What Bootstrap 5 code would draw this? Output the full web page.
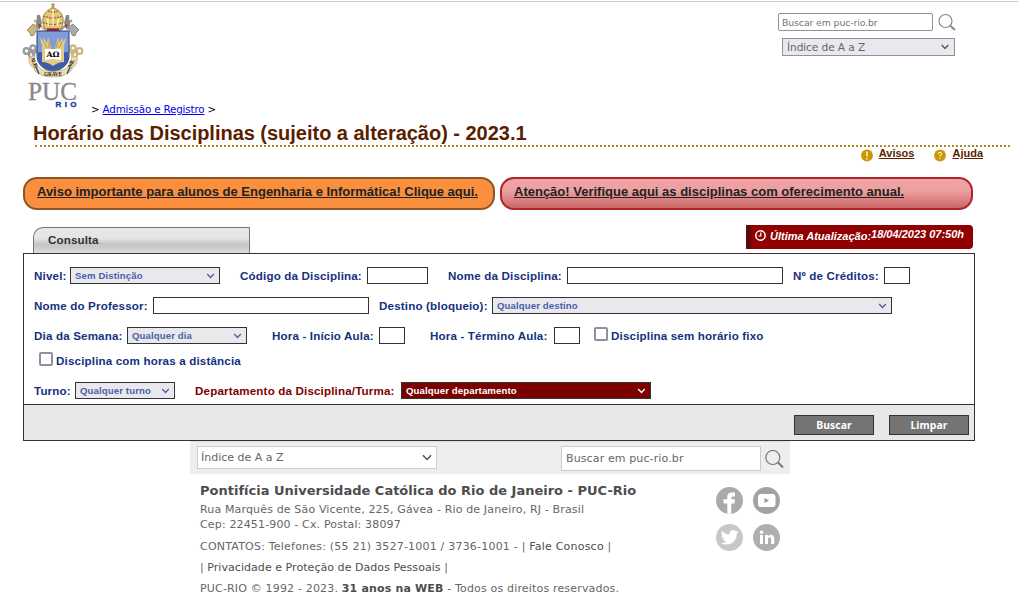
<!DOCTYPE html>
<html lang="pt-BR">
<head>
<meta charset="utf-8">
<title>PUC-Rio - Horário das Disciplinas</title>
<link rel="stylesheet" href="https://cdn.jsdelivr.net/npm/bootstrap@5.3.0/dist/css/bootstrap.min.css">
<script src="https://cdn.jsdelivr.net/npm/bootstrap@5.3.0/dist/js/bootstrap.bundle.min.js"></script>
<style>
html,body{height:592px;overflow:hidden}
body{font-family:"DejaVu Sans",sans-serif;font-size:11px;line-height:15px;color:#000;background:#fff}
.arial{font-family:"Liberation Sans",sans-serif;font-weight:700}
.topo{height:118px;border-top:1px solid #c8c8c8;margin-top:1px;padding-left:22px}
.brasao{width:63px;height:108px;flex:none}
.trilha{margin:100px 0 0 6px;font-size:10.3px;letter-spacing:-.15px;white-space:nowrap}
.trilha a{color:#00e}
.busca-topo{margin:11px 62px 0 auto;width:178px}
.caixa{display:flex;align-items:center;justify-content:space-between;white-space:nowrap;overflow:hidden}
.q1{width:155px;flex:none;height:18px;border:1px solid #8f8f9d;border-radius:2px;padding-left:3px;font-size:9.4px;letter-spacing:-.13px;color:#757575;background:#fff}
.s1{width:173px;height:18px;border:1px solid #8f8f9d;background:#e9e9ed;color:#666;font-size:10.6px;letter-spacing:-.1px;margin:7px 0 0 4px;padding:0 5px 0 4px}
.titulo{height:28px;margin:0 8px 0 35px;border-bottom:2px dotted #b08a28;color:#5a1e00;font-size:20px;letter-spacing:-.02px;line-height:28px;white-space:nowrap}
.titulo span{margin-left:-2px}
.ajuda{height:30px;padding-right:35px;font-size:11px}
.ajuda svg{margin-top:1px}
.ajuda a{margin:-1px 0 0 6px;color:#5a1e00}
.ajuda a+svg{margin-left:20px}
.avisos{padding-left:23px;gap:5px}
.aviso{height:33px;border:2px solid #8c5528;border-radius:14px;background:#fa8f3d;font-size:13px;line-height:25px;padding-left:12px;white-space:nowrap}
.aviso a{color:#222}
.a1{width:472px;letter-spacing:-.01px}
.a2{width:473px;border-color:#b02429;background:linear-gradient(#f0a3a4 0,#eea0a1 40%,#c96767 100%)}
.abas{height:43px;padding:15px 45px 0 33px}
.aba{width:217px;height:26px;margin-top:2px;border:1px solid #777;border-bottom:0;border-radius:10px 0 0 0;background:linear-gradient(#e8e8e8 0,#e5e5e5 42%,#c5c5c5 64%,#ccc 80%,#dedede 100%);font-size:11.6px;letter-spacing:.12px;color:#333;line-height:23px;padding-left:14px}
.atual{width:227px;height:24px;border-left:5px solid #5c0a0d;border-radius:0 4px 4px 0;background:#900000;color:#fff;font-style:italic;font-size:11px;white-space:nowrap;padding-left:4px}
.atual svg{margin:5px 4px 0 0}
.hora{padding-top:2px}
.painel{width:952px;height:188px;margin-left:23px;border:1px solid #333;font-size:11.6px;letter-spacing:.16px;color:#15317e}
.filtros{height:150px;padding-top:13px}
.linha{display:grid;height:17px;margin:0 0 13px 10px;line-height:17px;white-space:nowrap}
.l1{grid-template-columns:36px 170px 127px 81px 119px 226px 91px 26px}
.l2{grid-template-columns:119px 226px 113px 400px}
.l3{grid-template-columns:93px 145px 107px 51px 124px 40px 200px}
.l6{grid-template-columns:41px 120px 206px 250px}
.campo{height:17px;border:1px solid #333;background:#fff}
.esc{background:#e9e9ed;color:#4a5fa8;font-size:9.6px;letter-spacing:.12px;padding:0 4px}
.dep{background:#7b0000;color:#fff}
.rot-dep{color:#800000}
.g10{margin-right:10px}.g14{margin-right:14px}.g20{margin-right:20px}.g25{margin-right:25px}
.marca{display:inline-block;width:14px;height:14px;border:2px solid #8f8f9d;border-radius:2px;background:#fff;flex:none;margin-right:3px}
.recuo{padding-left:5px}
.acoes{height:36px;border-top:1px solid #333;background:#e8e8e8;padding:10px 5px 0 0;gap:15px}
.botao{width:80px;height:20px;border:1px solid #333;background:#747474;color:#fff;font:700 10.4px/18px "Noto Sans",sans-serif;letter-spacing:.1px;text-align:center}
.rodape{width:600px;margin-left:190px;color:#666}
.barra{height:33px;background:#eee;border-top:1px solid #ddd;padding:4px 6px 0 7px}
.s2{width:240px;flex:none;height:23px;border:1px solid #ccc;background:#fff;padding:0 4px 0 3px}
.q2{width:200px;flex:none;height:25px;border:1px solid #ccc;background:#fff;padding-left:4px;margin-left:124px;letter-spacing:.12px}
.dados{white-space:nowrap;padding:9px 0 0 10px;width:520px}
.dados p{margin:0 0 6px}
.dados h6{font-size:13px;line-height:15px;font-weight:700;color:#4d4d4d;margin:0 0 4px}
.dados b,.forte{color:#4d4d4d}
.dados .end{letter-spacing:.15px;margin-bottom:7px}
.tel{letter-spacing:.21px}
.priv{letter-spacing:.05px}
.cop{letter-spacing:.17px}
.redes{display:grid;grid-template-columns:27px 27px;gap:10px;margin-top:13px;height:64px;margin-left:6px}
svg{display:block;flex:none}
</style>
</head>
<body>
<header class="topo d-flex">
  <svg class="brasao" viewBox="22 2 63 108">
    <g fill="none" stroke="#999" stroke-width="2.2">
      <path d="M72 20L32 55"/>
      <circle cx="26.500" cy="51" r="2.800"/><circle cx="33" cy="48" r="2.600"/><circle cx="31.500" cy="54.500" r="2.600"/>
    </g>
    <g fill="none" stroke="#cbb67b" stroke-width="2.200"><path d="M34 20L74 55"/><circle cx="79.500" cy="51" r="2.800"/><circle cx="73" cy="48" r="2.600"/><circle cx="74.500" cy="54.500" r="2.600"/></g>
    <path d="M37 15h3l2 8-3 7-3-5z" fill="#888"/><path d="M69 15h-3l-2 8 3 7 3-5z" fill="#888"/>
    <path d="M38.500 24l3 1-2 4zM67.500 24l-3 1 2 4z" fill="#a1323a"/>
    <path d="M27 30l3-3 3-3 3 2 2 3-3 3-1 3-3 1-1-3z" fill="#c9b67c" stroke="#8d7e4e" stroke-width=".8"/>
    <path d="M79 30l-3-3-3-3-3 2-2 3 3 3 1 3 3 1 1-3z" fill="#aaa" stroke="#777" stroke-width=".8"/>
    <path d="M45 29c-4-8-3-18 8-21 11 3 12 13 8 21z" fill="#e4c878" stroke="#9b8145"/>
    <path d="M43.500 16q9.500 4 19 0M43 22.500q10 4 20 0M48 11q5 2 10 0" fill="none" stroke="#8f6b2b" stroke-width="1.300" stroke-dasharray="2 .8"/>
    <path d="M53 9V26M47.500 18l1 8M58.500 18l-1 8" stroke="#f9edbd" stroke-width="1.500"/>
    <circle cx="53" cy="7.500" r="1.800" fill="#c5a654"/><path d="M53 3v4M51 4.800h4" stroke="#9b8145"/>
    <path d="M47 28.500h12v3.500H47z" fill="#a51d27"/>
    <path d="M37 31h32v26q-1 11-16 15-15-4-16-15z" fill="#7f9bd8" stroke="#273e7b"/>
    <path d="M37.500 52h31v5q-1 11-15.500 14.500Q38.500 68 37.500 57z" fill="#3c5eaa"/>
    <path d="M42 62V46l-2-8 4 4-1-5 4 6 1-6 2 6 1 6h4l1-6 2-6 1 6 4-6-1 5 4-4-2 8v16q-6 0-11 4-5-4-11-4z" fill="#e2cb85"/>
    <path d="M44 42l3 6M62 42l-3 6M49 41v7M57 41v7" stroke="#a98d43" stroke-width=".8"/>
    <path d="M45 49h16v11l-8-1-8 1z" fill="#fff"/>
    <text x="53" y="57.300" font-family="DejaVu Serif,serif" font-weight="700" font-size="7.500" text-anchor="middle" textLength="13" lengthAdjust="spacingAndGlyphs">ΑΩ</text>
    <path d="M29 57l5-1q1 11 9 14 10 3 20 0 8-3 9-14l5 1q1 8-5 11 0 4-5 5-3 4-14 4t-14-4q-5-1-5-5-6-3-5-11z" fill="#eddcab" stroke="#c2ad74" stroke-width=".8"/>
    <path d="M36 67l3 7M70 67l-3 7" fill="none" stroke="#31549f" stroke-width="1.500"/>
    <g font-family="Liberation Serif,serif" font-weight="700" font-size="5.500" fill="#222">
      <text transform="translate(30.500 58) rotate(68)" textLength="11">ALIS</text>
      <text x="44" y="76.300" textLength="18" lengthAdjust="spacingAndGlyphs">GRAVE</text>
      <text transform="translate(71 68) rotate(-66)" textLength="9">NIL</text>
    </g>
    <text x="28" y="100" textLength="49" lengthAdjust="spacingAndGlyphs" font-family="Liberation Serif,serif" font-size="26" fill="#888" stroke="#888" stroke-width=".3">PUC</text>
    <text x="55.500" y="107" textLength="21" font-family="Liberation Sans,sans-serif" font-weight="700" font-size="8" fill="#20419a" stroke="#20419a" stroke-width=".4">RIO</text>
  </svg>
  <div class="trilha">&gt; <a href="#">Admissão e Registro</a> &gt;</div>
  <div class="busca-topo">
    <div class="d-flex align-items-center"><div class="caixa q1">Buscar em puc-rio.br</div>
      <svg class="ms-1" width="20" height="18" viewBox="0 0 20 18" fill="none" stroke="#888" stroke-width="1.200"><circle cx="8.500" cy="8" r="6.500"/><path d="M13 12.500L18 17" stroke-width="2"/></svg></div>
    <div class="caixa s1">Índice de A a Z<svg width="8" height="6" viewBox="0 0 8 6" fill="none" stroke="#555" stroke-width="1.400"><path d="M.7 1L4 4.500 7.300 1"/></svg></div>
  </div>
</header>
<h1 class="titulo arial"><span>Horário das Disciplinas (sujeito a alteração) - 2023.1</span></h1>
<nav class="ajuda arial d-flex justify-content-end">
  <svg width="12" height="14" viewBox="0 0 12 14"><circle cx="6" cy="7.500" r="5.900" fill="#c99700"/><path d="M6 3.500v5M6 10v1.500" stroke="#fff" stroke-width="1.400"/></svg>
  <a href="#">Avisos</a>
  <svg width="12" height="14" viewBox="0 0 12 14"><circle cx="6" cy="7.500" r="5.900" fill="#c99700"/><path d="M4.200 6Q4.300 4.300 6 4.300T7.700 5.800Q7.600 6.800 6 7.500v1.300M6 9.800v1.300" fill="none" stroke="#fff"/></svg>
  <a href="#">Ajuda</a>
</nav>
<section class="avisos arial d-flex">
  <div class="aviso a1"><a href="#">Aviso importante para alunos de Engenharia e Informática! Clique aqui.</a></div>
  <div class="aviso a2"><a href="#">Atenção! Verifique aqui as disciplinas com oferecimento anual.</a></div>
</section>
<div class="abas arial d-flex justify-content-between">
  <div class="aba">Consulta</div>
  <div class="atual d-flex"><svg width="11" height="11" viewBox="0 0 11 11" fill="none" stroke="#fff" stroke-width="1.500"><circle cx="5.500" cy="5.500" r="4.700"/><path d="M5.800 2.500V6H3.500" stroke-width="1.200"/></svg><span class="pt-1">Última Atualização:</span><span class="hora">18/04/2023 07:50h</span></div>
</div>
<main class="painel arial">
  <div class="filtros">
    <div class="linha l1"><span>Nivel:</span><div class="campo esc caixa g20">Sem Distinção<svg width="9" height="6" viewBox="0 0 8 6" fill="none" stroke="currentColor" stroke-width="1.300"><path d="M.7 1L4 4.500 7.300 1"/></svg></div>
      <span>Código da Disciplina:</span><div class="campo g20"></div><span>Nome da Disciplina:</span><div class="campo g10"></div><span>Nº de Créditos:</span><div class="campo"></div></div>
    <div class="linha l2"><span>Nome do Professor:</span><div class="campo g10"></div><span>Destino (bloqueio):</span><div class="campo esc caixa">Qualquer destino<svg width="9" height="6" viewBox="0 0 8 6" fill="none" stroke="currentColor" stroke-width="1.300"><path d="M.7 1L4 4.500 7.300 1"/></svg></div></div>
    <div class="linha l3 mb-2"><span>Dia da Semana:</span><div class="campo esc caixa g25">Qualquer dia<svg width="9" height="6" viewBox="0 0 8 6" fill="none" stroke="currentColor" stroke-width="1.300"><path d="M.7 1L4 4.500 7.300 1"/></svg></div>
      <span>Hora - Início Aula:</span><div class="campo g25"></div><span>Hora - Término Aula:</span><div class="campo g14"></div>
      <div class="d-flex"><i class="marca"></i><span>Disciplina sem horário fixo</span></div></div>
    <div class="linha d-flex recuo"><i class="marca"></i><span>Disciplina com horas a distância</span></div>
    <div class="linha l6 mb-0"><span>Turno:</span><div class="campo esc caixa g20">Qualquer turno<svg width="9" height="6" viewBox="0 0 8 6" fill="none" stroke="currentColor" stroke-width="1.300"><path d="M.7 1L4 4.500 7.300 1"/></svg></div>
      <span class="rot-dep">Departamento da Disciplina/Turma:</span><div class="campo esc dep caixa">Qualquer departamento<svg width="9" height="6" viewBox="0 0 8 6" fill="none" stroke="currentColor" stroke-width="1.300"><path d="M.7 1L4 4.500 7.300 1"/></svg></div></div>
  </div>
  <div class="acoes d-flex justify-content-end"><div class="botao">Buscar</div><div class="botao">Limpar</div></div>
</main>
<footer class="rodape">
  <div class="barra d-flex"><div class="caixa s2">Índice de A a Z<svg width="10" height="7" viewBox="0 0 8 6" fill="none" stroke="#555" stroke-width="1.300"><path d="M.5 1L4 4.700 7.500 1"/></svg></div>
    <div class="caixa q2">Buscar em puc-rio.br</div>
    <svg class="ms-1 mt-1" width="20" height="20" viewBox="0 0 20 20" fill="none" stroke="#777" stroke-width="1.200"><circle cx="7.800" cy="7.500" r="7"/><path d="M13 12.500L18 17.500" stroke-width="2"/></svg></div>
  <div class="d-flex">
    <div class="dados"><h6>Pontifícia Universidade Católica do Rio de Janeiro - PUC-Rio</h6>
      <p class="end">Rua Marquês de São Vicente, 225, Gávea - Rio de Janeiro, RJ - Brasil<br>Cep: 22451-900 - Cx. Postal: 38097</p>
      <p class="tel">CONTATOS: Telefones: (55 21) 3527-1001 / 3736-1001 - | <span class="forte">Fale Conosco</span> |</p>
      <p class="priv">| <span class="forte">Privacidade e Proteção de Dados Pessoais</span> |</p>
      <p class="cop">PUC-RIO © 1992 - 2023. <b>31 anos na WEB</b> - Todos os direitos reservados.</p></div>
    <div class="redes">
      <svg width="27" height="27" viewBox="0 0 27 27"><circle cx="13.500" cy="13.500" r="13.500" fill="#aaa"/><path d="M11.300 27V16.500H7.500v-4.200h3.800V10Q11.300 5.500 15.500 5.500h3.500V9.500h-2.200Q15.300 9.500 15.300 11v1.300H19l-.6 4.200h-3.100v10.300z" fill="#fff"/></svg>
      <svg width="27" height="27" viewBox="0 0 27 27"><circle cx="13.500" cy="13.500" r="13.500" fill="#a3a3a3"/><rect x="5" y="7" width="17.500" height="13" rx="3" fill="#fff"/><path d="M11.500 11v5l4.500-2.500z" fill="#999"/></svg>
      <svg width="27" height="27" viewBox="0 0 27 27"><circle cx="13.500" cy="13.500" r="13.500" fill="#c8c8c8"/><path transform="translate(4.800 4.500) scale(.74)" fill="#fff" d="M23.950 4.570a10 10 0 0 1-2.820.77 4.960 4.960 0 0 0 2.160-2.720c-.95.550-2 .96-3.130 1.180a4.920 4.920 0 0 0-8.380 4.480C7.690 8.090 4.070 6.130 1.640 3.160a4.820 4.820 0 0 0-.67 2.480c0 1.710.87 3.210 2.190 4.100a4.900 4.900 0 0 1-2.230-.62v.06a4.920 4.920 0 0 0 3.950 4.830 5 5 0 0 1-2.210.08 4.940 4.940 0 0 0 4.600 3.420A9.870 9.870 0 0 1 0 19.540a13.990 13.990 0 0 0 7.550 2.210c9.050 0 14-7.500 14-13.980 0-.21 0-.42-.02-.63a9.940 9.940 0 0 0 2.460-2.550z"/></svg>
      <svg width="27" height="27" viewBox="0 0 27 27" fill="#fff"><circle cx="13.500" cy="13.500" r="13.500" fill="#afafaf"/><circle cx="8.500" cy="8.300" r="1.800"/><path d="M7 11h3v9H7zM12 11h2.800v1.300q1-1.600 3-1.600 3.400 0 3.400 4V20h-3v-4.800q0-2-1.500-2-1.700 0-1.700 2V20h-3z"/></svg>
    </div>
  </div>
</footer>
</body>
</html>
